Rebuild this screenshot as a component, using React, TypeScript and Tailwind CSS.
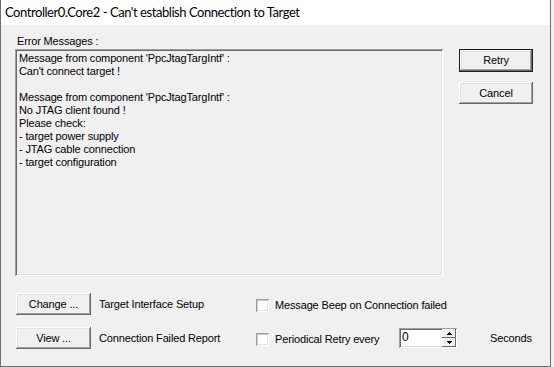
import React from "react";

const font = { fontFamily: '"Liberation Sans", Arial, sans-serif', letterSpacing: "-0.15px" };

function WinButton({ label, isDefault = false, className = "" }: { label: string; isDefault?: boolean; className?: string }) {
  return (
    <div
      className={
        "flex items-center justify-center bg-[#f0f0f0] text-[11px] text-black " +
        (isDefault
          ? "border border-[#1e1e1e] shadow-[inset_-1px_-1px_#696969,inset_1px_1px_#ffffff,inset_-2px_-2px_#a0a0a0,inset_2px_2px_#e3e3e3] "
          : "shadow-[inset_-1px_-1px_#696969,inset_1px_1px_#ffffff,inset_-2px_-2px_#a0a0a0,inset_2px_2px_#e3e3e3] ") +
        className
      }
    >
      {label}
    </div>
  );
}

function CheckBox() {
  return (
    <div className="h-[13px] w-[13px] shrink-0 bg-white shadow-[inset_1px_1px_#a0a0a0,inset_-1px_-1px_#ffffff,inset_2px_2px_#c9c9c9,inset_-2px_-2px_#e3e3e3]" />
  );
}

export default function App() {
  const lines = [
    "Message from component 'PpcJtagTargIntf' :",
    "Can't connect target !",
    "",
    "Message from component 'PpcJtagTargIntf' :",
    "No JTAG client found !",
    "Please check:",
    "- target power supply",
    "- JTAG cable connection",
    "- target configuration",
  ];
  return (
    <div className="flex h-[367px] w-[554px] bg-[#f0f0f0]">
      <div className="flex h-[367px] w-[551px] flex-col border-l border-r border-b border-[#6e6e6e] bg-[#f0f0f0]" style={font}>
        <div
          className="flex h-[25px] items-center bg-white pl-[4px] text-[13px] text-black"
          style={{ fontFamily: 'Lato, "Segoe UI", sans-serif', letterSpacing: "-0.45px" }}
        >
          Controller0.Core2 - Can't establish Connection to Target
        </div>
        <div className="flex pl-[14px] pt-[9px]">
          <div className="flex w-[428px] flex-col">
            <div className="h-[15px] pl-[2px] text-[11px] leading-[15px] text-black">Error Messages :</div>
            <div className="h-[227px] bg-[#f0f0f0] px-[4px] pt-[3px] text-[11px] leading-[13px] text-black shadow-[inset_1px_1px_#a0a0a0,inset_-1px_-1px_#ffffff,inset_2px_2px_#696969,inset_-2px_-2px_#e3e3e3]">
              {lines.map((l, i) => (
                <div key={i} className="h-[13px] whitespace-pre">
                  {l}
                </div>
              ))}
            </div>
          </div>
          <div className="ml-[16px] flex flex-col pt-[15px]">
            <WinButton label="Retry" isDefault className="h-[23px] w-[74px]" />
            <WinButton label="Cancel" className="mt-[10px] h-[22px] w-[74px]" />
          </div>
        </div>
        <div className="mt-[17px] flex items-center pl-[15px] text-[11px] text-black">
          <WinButton label="Change ..." className="h-[22px] w-[75px]" />
          <div className="ml-[8px] w-[157px]">Target Interface Setup</div>
          <div className="mt-[3px] flex items-center">
            <CheckBox />
            <div className="ml-[6px]">Message Beep on Connection failed</div>
          </div>
        </div>
        <div className="mt-[12px] flex items-center pl-[15px] text-[11px] text-black">
          <WinButton label="View ..." className="h-[22px] w-[75px]" />
          <div className="ml-[8px] w-[157px]">Connection Failed Report</div>
          <div className="mt-[3px] flex w-[143px] items-center">
            <CheckBox />
            <div className="ml-[6px]">Periodical Retry every</div>
          </div>
          <div className="flex h-[20px] w-[58px] items-stretch bg-white shadow-[inset_1px_1px_#a0a0a0,inset_-1px_-1px_#ffffff,inset_2px_2px_#696969,inset_-2px_-2px_#e3e3e3]">
            <div className="flex-1 pl-[3px] pt-[2px] text-[12px] leading-[14px]">0</div>
            <div className="flex w-[15px] flex-col py-[1px] pr-[1px]">
              <div className="flex flex-1 items-center justify-center bg-[#f0f0f0] shadow-[inset_-1px_-1px_#696969,inset_1px_1px_#ffffff]">
                <svg width="5" height="3" viewBox="0 0 5 3"><path d="M2 0h1v1h1v1h1v1H0V2h1V1h1z" fill="#000" /></svg>
              </div>
              <div className="flex flex-1 items-center justify-center bg-[#f0f0f0] shadow-[inset_-1px_-1px_#696969,inset_1px_1px_#ffffff]">
                <svg width="5" height="3" viewBox="0 0 5 3"><path d="M0 0h5v1H4v1H3v1H2V2H1V1H0z" fill="#000" /></svg>
              </div>
            </div>
          </div>
          <div className="ml-[33px]">Seconds</div>
        </div>
      </div>
    </div>
  );
}
